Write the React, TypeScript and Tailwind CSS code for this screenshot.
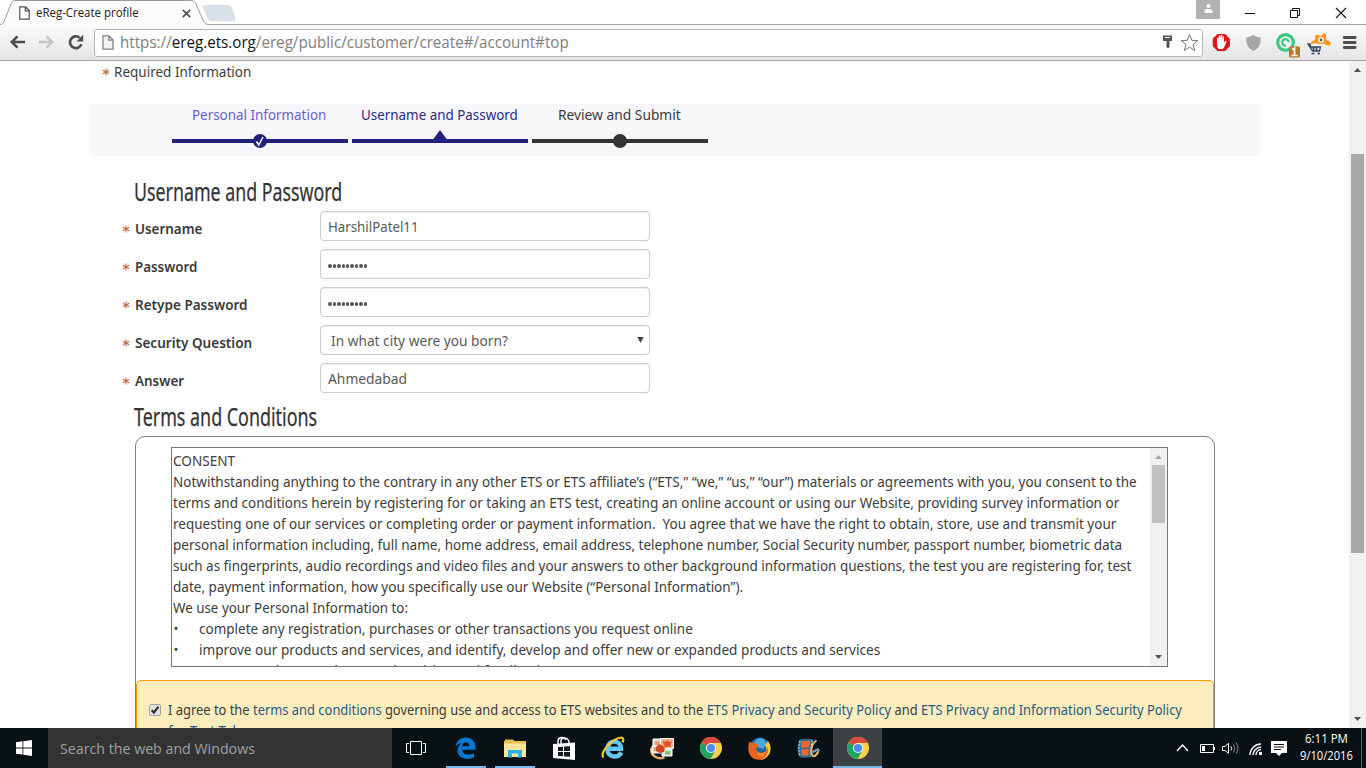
import React, { useLayoutEffect, useRef } from "react";

/* Sets one line of text to the width of its box. */
function Fit({ className, children }: { className: string; children: React.ReactNode }) {
  const box = useRef<HTMLSpanElement>(null);
  const text = useRef<HTMLSpanElement>(null);
  useLayoutEffect(() => {
    if (!box.current || !text.current) return;
    const ratio = box.current.clientWidth / text.current.offsetWidth;
    text.current.style.transform = `scaleX(${ratio})`;
  }, []);
  return (
    <span ref={box} className={`block shrink-0 whitespace-pre ${className}`}>
      <span ref={text} className="inline-block origin-left">
        {children}
      </span>
    </span>
  );
}

function PageIcon({ className, stroke, fill = "#fff" }: { className: string; stroke: string; fill?: string }) {
  return (
    <svg className={className} viewBox="0 0 11 14" fill={fill} stroke={stroke} strokeWidth="1.2">
      <path d="M.8.8h5.7l3.7 3.8v8.6H.8zM6.3.8v4h3.9" />
    </svg>
  );
}

function TabStrip() {
  return (
    <div className="relative flex h-[25px] bg-white">
      <svg className="absolute left-0 top-0 h-[26px] w-[1366px]" viewBox="0 0 1366 26" fill="none">
        <path d="M205 24.5H1366" stroke="#a3a3a3" />
        <path d="M0 24.5C3 24.5 4 22 5 19L11 4C12 1.5 13 .5 15 .5H190C194 .5 195 2 196 4L203 20C204 23 206 24.5 209 24.5V26H0z" fill="#fbfbfb" />
        <path d="M0 24.5C3 24.5 4 22 5 19L11 4C12 1.5 13 .5 15 .5H190C194 .5 195 2 196 4L203 20C204 23 206 24.5 209 24.5" stroke="#9a9a9a" />
        <path d="M206 5.5h22c2 0 3 .8 3.500 2l3.500 11c.5 1.500 0 2.300-1.500 2.300H212c-2 0-3-.5-3.700-2L203.500 8c-.6-1.500.5-2.500 2.500-2.500z" fill="#dae0e9" stroke="#d0d5dd" strokeWidth=".7" />
      </svg>
      <div className="relative flex w-full items-center">
        <PageIcon className="ml-[19px] mt-[1px] h-[14px] w-[11px]" stroke="#505050" />
        <Fit className="ml-[6px] mt-[1px] w-[103px] text-[12px] leading-[16px] text-[#222]">eReg-Create profile</Fit>
        <svg className="ml-[43px] mt-[1px] h-[9px] w-[9px]" viewBox="0 0 9 9" stroke="#555" strokeWidth="1.8">
          <path d="M.8.8l7.400 7.400M8.200.8L.8 8.200" />
        </svg>
        <div className="ml-[1005px] flex h-[19px] w-[24px] shrink-0 items-center justify-center self-start bg-[#b2b2b2]">
          <svg className="mb-[3px] h-[9px] w-[9px]" viewBox="0 0 9 9" fill="#fff">
            <circle cx="4.5" cy="2" r="2" />
            <path d="M.5 9V7.500C.5 5.500 2 5 4.500 5s4 .5 4 2.500V9z" />
          </svg>
        </div>
        <svg className="ml-[25px] h-[12px] w-[102px] shrink-0" viewBox="0 0 102 12" fill="none" stroke="#111">
          <path d="M0 6.500h10M45.500 3.500h7v7h-7zM47.500 3.500v-2h7v7h-2" />
          <path d="M91 1l10 10M101 1L91 11" strokeWidth="1.1" />
        </svg>
      </div>
    </div>
  );
}

function Toolbar() {
  return (
    <div className="flex h-[36px] items-center border-b border-[#a5a5a5] bg-gradient-to-b from-[#fbfbfb] to-[#e5e5e5] pb-[1px]">
      <svg className="ml-[9px] h-[16px] w-[75px] shrink-0" viewBox="0 0 75 16" fill="none" strokeWidth="2.6">
        <path d="M16 8H3M8.500 2.300L2.800 8l5.700 5.700" stroke="#4c4c4c" />
        <path d="M30 8h13M37.500 2.300L43.200 8l-5.700 5.700" stroke="#c5c5c5" />
        <path d="M72.400 10.300A5.900 5.900 0 1 1 70.700 3.700" stroke="#4c4c4c" />
        <path d="M74.200 .8v6.700h-6.700z" fill="#4c4c4c" />
      </svg>
      <div className="mt-[1px] ml-[10px] flex h-[28px] w-[1109px] shrink-0 items-center rounded-[3px] border border-[#b5b5b5] bg-white pb-[1px]">
        <PageIcon className="ml-[7px] h-[15px] w-[12px]" stroke="#808080" fill="#f2f2f2" />
        <Fit className="ml-[6px] w-[449px] text-[15.5px] leading-[22px] text-[#808080]">
          https://<span className="text-[#111]">ereg.ets.org</span>/ereg/public/customer/create#/account#top
        </Fit>
        <svg className="ml-[593px] h-[19px] w-[36px] shrink-0" viewBox="0 0 36 19" fill="none">
          <path d="M1 2.500h9v5.500H7.500v6L6 15.500 4.500 14V8H1z" fill="#555" />
          <path d="M3 4.500h5" stroke="#fff" />
          <path d="M27.500 1.500l2.300 5.800 6 .3-4.700 3.900 1.600 6-5.200-3.400-5.200 3.400 1.600-6-4.700-3.900 6-.3z" stroke="#777" />
        </svg>
      </div>
      <svg className="mt-[1px] ml-[8px] h-[30px] w-[146px] shrink-0" viewBox="0 0 146 30">
        <path d="M6.500 6h7.600l4.800 4.800v7.400l-4.800 4.800H6.500l-4.800-4.800V10.800z" fill="#e01318" />
        <path d="M5.900 14.500v-4c0-1 1.500-1 1.500 0V13l.3-4.500c0-1.200 1.600-1.200 1.600 0V13l.3-5.500c0-1 1.600-1 1.600 0V13l.4-4.300c0-1 1.400-1 1.400 0v5.800l1-1.300c.7-.9 1.900-.2 1.400.7l-2.200 5.300c-1 2.800-6.300 2.600-6.800-.3z" fill="#fff" />
        <path d="M42.500 7c2.300 1.800 4.800 2.200 7.300 2.500 0 6-1.300 10.500-7.300 13.500-6-3-7.300-7.500-7.300-13.500 2.500-.3 5-.7 7.300-2.500z" fill="#a5a5a5" />
        <circle cx="74.500" cy="14.500" r="7.800" fill="none" stroke="#39ca80" strokeWidth="3.200" />
        <path d="M77.800 14.300a3.300 3.300 0 1 0-3 3.400" fill="none" stroke="#39ca80" strokeWidth="2.200" />
        <rect x="78" y="18.500" width="11" height="11" rx="1.500" fill="#b8772b" />
        <path d="M81 21.500l2.500-1.300V27M80.500 27.500h6" fill="none" stroke="#fff" strokeWidth="1.7" />
        <path d="M105 7c2-1 3 1 5 1 2-1 2-4 5-2 1 1-.5 3 0 5 2 2 5 2 5 5-2 3-5 1-7-.5-3 1-6 1-8-.5l-5 1c-1-2 2-3 4-4 1-2-1-3 1-5z" fill="#f7981d" />
        <circle cx="110" cy="12" r="2.800" fill="#fff" />
        <circle cx="110" cy="12" r="1.400" fill="#555" />
        <path d="M97 16h2l1 3h9.500l-1 4h-7z" fill="#dfe4e9" stroke="#34495e" strokeWidth="1.3" />
        <path d="M102.500 19v4M105.500 19v4M100.500 25.500h3M106.500 25.500h2.500" fill="none" stroke="#34495e" strokeWidth="1.7" />
        <path d="M133.200 9.500h11M133.200 14.500h11M133.200 19.500h11" stroke="#4f4f4f" strokeWidth="2.8" strokeLinecap="round" />
      </svg>
    </div>
  );
}

function Star({ className }: { className: string }) {
  return (
    <svg className={`h-[8px] w-[8px] shrink-0 ${className}`} viewBox="0 0 8 8" stroke="#c2623f" strokeWidth="1.1">
      <path d="M4 .5v7M.8 2.300l6.400 3.400M7.200 2.300L.8 5.700" />
    </svg>
  );
}

function Field({ label, width, children, extra }: { label: string; width: string; children: React.ReactNode; extra?: React.ReactNode }) {
  return (
    <div className="flex h-[30px] items-center">
      <Star className="ml-[122px] mt-[6px]" />
      <div className="ml-[4.5px] mt-[5px] w-[185.5px]">
        <Fit className={`${width} text-[14px] font-semibold leading-[20px] text-[#3a3a3a]`}>{label}</Fit>
      </div>
      <div className="flex h-[30px] w-[330px] items-center rounded-[4px] border border-[#ccc] bg-white pl-[7.4px] text-[14px] leading-[20px] text-[#5a5a5a] shadow-[inset_0_1px_1px_rgba(0,0,0,0.075)]">
        {children}
        {extra}
      </div>
    </div>
  );
}

function Dots() {
  return (
    <div className="mt-[4px] flex gap-[1px]">
      {Array.from({ length: 9 }, (_, i) => (
        <span key={i} className="h-[3.4px] w-[3.4px] rounded-full bg-[#555]" />
      ))}
    </div>
  );
}

function Steps() {
  return (
    <div className="ml-[90px] mt-[21px] flex h-[52px] w-[1170px] gap-[4px] bg-[#f7f7f9] pl-[82px]">
      <div className="flex w-[176px] flex-col items-center">
        <Fit className="mr-[2px] h-[22px] w-[134px] text-[14px] leading-[21px] text-[#6a5fd0]">Personal Information</Fit>
        <svg className="h-[17px] w-[176px]" viewBox="0 0 176 17">
          <path d="M0 13h176v4H0z" fill="#232180" />
        </svg>
        <svg className="relative -mt-[9px] h-[14px] w-[14px]" viewBox="0 0 14 14">
          <circle cx="7" cy="7" r="7" fill="#232180" />
          <path d="M3.500 7.500l2.200 3.500 4.300-8" fill="none" stroke="#fff" strokeWidth="1.5" />
        </svg>
      </div>
      <div className="flex w-[176px] flex-col items-center">
        <Fit className="mr-[1px] h-[22px] w-[157px] text-[14px] leading-[21px] text-[#2c2a86]">Username and Password</Fit>
        <svg className="h-[17px] w-[176px]" viewBox="0 0 176 17" fill="#232180">
          <path d="M0 13h176v4H0zM88 4l7 9.500H81z" />
        </svg>
      </div>
      <div className="flex w-[176px] flex-col items-center">
        <Fit className="mr-[2px] h-[22px] w-[123px] text-[14px] leading-[21px] text-[#3d3d3d]">Review and Submit</Fit>
        <svg className="h-[17px] w-[176px]" viewBox="0 0 176 17">
          <path d="M0 13h176v4H0z" fill="#333" />
        </svg>
        <span className="relative -mt-[9px] h-[14px] w-[14px] rounded-full bg-[#333]" />
      </div>
    </div>
  );
}

function Consent() {
  return (
    <div className="ml-[35px] flex h-[220px] w-[997px] border border-[#777] bg-white">
      <div className="flex-1 overflow-hidden pl-[1.4px] pt-[2px] text-[14px] leading-[21px] text-[#3d3d3d]">
        <Fit className="h-[21px] w-[62px]">CONSENT</Fit>
        <Fit className="h-[21px] w-[964px]">Notwithstanding anything to the contrary in any other ETS or ETS affiliate’s (“ETS,” “we,” “us,” “our”) materials or agreements with you, you consent to the</Fit>
        <Fit className="h-[21px] w-[946px]">terms and conditions herein by registering for or taking an ETS test, creating an online account or using our Website, providing survey information or</Fit>
        <Fit className="h-[21px] w-[943px]">requesting one of our services or completing order or payment information.  You agree that we have the right to obtain, store, use and transmit your</Fit>
        <Fit className="h-[21px] w-[949px]">personal information including, full name, home address, email address, telephone number, Social Security number, passport number, biometric data</Fit>
        <Fit className="h-[21px] w-[958px]">such as fingerprints, audio recordings and video files and your answers to other background information questions, the test you are registering for, test</Fit>
        <Fit className="h-[21px] w-[570px]">date, payment information, how you specifically use our Website (“Personal Information”).</Fit>
        <Fit className="h-[21px] w-[235px]">We use your Personal Information to:</Fit>
        <div className="flex"><span className="w-[25.5px] text-[13px]">•</span><Fit className="h-[21px] w-[494px]">complete any registration, purchases or other transactions you request online</Fit></div>
        <div className="flex"><span className="w-[25.5px] text-[13px]">•</span><Fit className="h-[21px] w-[681px]">improve our products and services, and identify, develop and offer new or expanded products and services</Fit></div>
        <div className="flex"><span className="w-[25.5px] text-[13px]">•</span><Fit className="h-[21px] w-[345px]">process and respond to your inquiries and feedback</Fit></div>
      </div>
      <div className="flex w-[17px] flex-col items-center bg-[#f1f1f1]">
        <svg className="mt-[7px] h-[4px] w-[7px]" viewBox="0 0 7 4" fill="#a3a3a3"><path d="M3.500 0L7 4H0z" /></svg>
        <div className="mt-[6px] h-[58px] w-[13px] bg-[#c1c1c1]" />
        <svg className="mb-[7px] mt-auto h-[4px] w-[7px]" viewBox="0 0 7 4" fill="#505050"><path d="M0 0h7L3.500 4z" /></svg>
      </div>
    </div>
  );
}

function Agreement() {
  return (
    <div className="mt-[13px] flex h-[80px] rounded-[5px] border border-[#f90] bg-[#fdedbd] pl-[12px] pt-[18px]">
      <svg className="mt-[5px] h-[12px] w-[12px] shrink-0" viewBox="0 0 12 12">
        <rect x=".5" y=".5" width="11" height="11" rx="1.500" fill="#e3e3e3" stroke="#a2a2a2" />
        <path d="M2.700 6.200L4.900 8.500 9.400 2.800" fill="none" stroke="#333" strokeWidth="2.2" />
      </svg>
      <div className="ml-[7px] text-[14px] leading-[21px] text-[#3a3a3a]">
        <Fit className="h-[21px] w-[1014px]">
          I agree to the <span className="text-[#255b84]">terms and conditions</span> governing use and access to ETS websites and to the <span className="text-[#255b84]">ETS Privacy and Security Policy</span> and <span className="text-[#255b84]">ETS Privacy and Information Security Policy</span>
        </Fit>
        <Fit className="h-[21px] w-[91px] text-[#255b84]">for Test Takers</Fit>
      </div>
    </div>
  );
}

function Page() {
  return (
    <div className="flex h-[667px] overflow-hidden bg-white font-['Noto_Sans',sans-serif]">
      <div className="w-[1349px] shrink-0">
        <div className="flex h-[22px] items-center">
          <Star className="ml-[102px]" />
          <Fit className="ml-[4px] w-[137px] text-[14px] leading-[20px] text-[#3d3d3d]">Required Information</Fit>
        </div>
        <Steps />
        <div className="ml-[134.4px] mt-[18px] h-[37px]">
          <Fit className="w-[208px] text-[25.5px] leading-[34px] text-[#333] [-webkit-text-stroke:0.25px_#333]">Username and Password</Fit>
        </div>
        <div className="flex flex-col gap-[8px]">
          <Field label="Username" width="w-[67px]"><Fit className="mt-[2px] w-[91px]">HarshilPatel11</Fit></Field>
          <Field label="Password" width="w-[62px]"><Dots /></Field>
          <Field label="Retype Password" width="w-[113px]"><Dots /></Field>
          <Field
            label="Security Question"
            width="w-[117px]"
            extra={<svg className="ml-auto mr-[5.5px] mt-[-1px] h-[6px] w-[7px]" viewBox="0 0 7 6" fill="#444"><path d="M.3 0h6.400L3.500 6z" /></svg>}
          >
            <Fit className="ml-[3px] mt-[2px] w-[177px]">In what city were you born?</Fit>
          </Field>
          <Field label="Answer" width="w-[49px]"><Fit className="mt-[2px] w-[79px]">Ahmedabad</Fit></Field>
        </div>
        <div className="ml-[134.4px] mt-[6px] h-[37px]">
          <Fit className="w-[183px] text-[25.5px] leading-[34px] text-[#333] [-webkit-text-stroke:0.25px_#333]">Terms and Conditions</Fit>
        </div>
        <div className="ml-[135px] h-[340px] w-[1080px] rounded-t-[10px] border border-[#808080] pt-[10px]">
          <Consent />
          <Agreement />
        </div>
      </div>
      <div className="flex w-[17px] shrink-0 flex-col items-center bg-[#f1f1f1]">
        <svg className="mt-[7px] h-[4px] w-[7px]" viewBox="0 0 7 4" fill="#505050"><path d="M3.500 0L7 4H0z" /></svg>
        <div className="mt-[82px] h-[399px] w-[13px] bg-[#a8a8a8]" />
        <svg className="mb-[7px] mt-auto h-[4px] w-[7px]" viewBox="0 0 7 4" fill="#505050"><path d="M0 0h7L3.500 4z" /></svg>
      </div>
    </div>
  );
}

function ChromeLogo() {
  return (
    <svg className="h-[22px] w-[22px]" viewBox="0 0 22 22">
      <circle cx="11" cy="11" r="11" fill="#fdd04a" />
      <path d="M11 11L1.500 5.500A11 11 0 0 0 10.500 22L15.300 13.500z" fill="#1da362" />
      <path d="M11 11L1.500 5.500A11 11 0 0 1 20.800 6H11z" fill="#dc4a3d" />
      <circle cx="11" cy="11" r="5.1" fill="#f3f3f3" />
      <circle cx="11" cy="11" r="4" fill="#4c8bf5" />
    </svg>
  );
}

function TaskButton({ children, state = "" }: { children: React.ReactNode; state?: string }) {
  return <div className={`flex h-[40px] w-[49px] shrink-0 items-center justify-center ${state}`}>{children}</div>;
}

function Taskbar() {
  return (
    <div className="flex h-[40px] items-center bg-[#0a1114]">
      <div className="flex w-[48px] items-center pl-[16px]">
        <svg className="h-[16px] w-[16px]" viewBox="0 0 16 16" fill="#fff">
          <path d="M0 2.200l6.500-.9v6.200H0zM7.300 1.200L16 0v7.500H7.300zM0 8.400h6.500v6.200L0 13.700zM7.300 8.400H16V16l-8.700-1.200z" />
        </svg>
      </div>
      <div className="flex h-[40px] w-[344px] shrink-0 items-center bg-[#333] pl-[12px]">
        <Fit className="mt-[2px] w-[195px] text-[14.5px] leading-[20px] text-[#a0a0a0]">Search the web and Windows</Fit>
      </div>
      <TaskButton>
        <svg className="mr-[1px] h-[14px] w-[20px]" viewBox="0 0 20 14" fill="none" stroke="#fff"><path d="M4.500.5h11v13h-11zM3 2.500H.5v9H3M17 2.500h2.500v9H17" /></svg>
      </TaskButton>
      <TaskButton state="relative after:absolute after:bottom-0 after:left-[5px] after:h-[2px] after:w-[40px] after:bg-[#76b9ed]">
        <svg className="h-[22px] w-[21px]" viewBox="0 0 21 22" fill="#0078d7">
          <path d="M.5 10C1 4.500 5 .5 11 .5c6 0 9.500 4.500 9.500 9.800v2.500H7.200c.2 5.200 7.300 6.300 11.800 3.300v4.200c-7 3.600-16.500 1-16.500-7 0-3.500 2-5.800 4.700-7.300C3.800 6.300 1.800 8 .5 10zm6.800-.8h7c.2-5.200-6.400-5-7 0z" />
        </svg>
      </TaskButton>
      <TaskButton state="relative after:absolute after:bottom-0 after:left-[5px] after:h-[2px] after:w-[40px] after:bg-[#76b9ed]">
        <svg className="h-[19px] w-[22px]" viewBox="0 0 22 19">
          <path d="M0 2h1V.5h8L10.500 2H22v16H0z" fill="#e9bd58" />
          <path d="M0 4.500h22V18H0z" fill="#fde69b" />
          <path d="M4 11h14v7.500h-4v-4H8v4H4z" fill="#25b5ef" />
        </svg>
      </TaskButton>
      <TaskButton>
        <svg className="h-[24px] w-[22px]" viewBox="0 0 22 24">
          <path d="M5 8V5c0-4 6-5 8-1M8 8V4c1-3 7-3 8 2v2" fill="none" stroke="#fff" strokeWidth="1.4" />
          <path d="M0 8l22-1.500V24L0 22z" fill="#fff" />
          <path d="M5 11l5-.3v4.200H5zM11 10.600l6-.4v4.700h-6zM5 16h5v4.300L5 20zM11 16h6v4.800l-6-.4z" fill="#111a1f" />
        </svg>
      </TaskButton>
      <TaskButton>
        <svg className="h-[24px] w-[24px]" viewBox="0 0 24 24" fill="none">
          <path d="M20.500 16.500c-4 6.500-14 5-14-3.500C6.500 3 20 3.500 20 12.700H8" stroke="#64c6f2" strokeWidth="4.4" />
          <path d="M2.500 21.500C-1.500 17 11 2 20.500 1.500c2.500.3 2 3 1 5" stroke="#f6c532" strokeWidth="2.2" />
        </svg>
      </TaskButton>
      <TaskButton>
        <svg className="h-[23px] w-[24px]" viewBox="0 0 24 23">
          <path d="M1.500 11c-1.500 7 5 12 13 9.500" fill="none" stroke="#dfae66" strokeWidth="2.6" />
          <path d="M3 2h9v8H3zM2 9h9v7H2zM12 11h10v8H12z" fill="#d8e8ea" stroke="#fff" />
          <path d="M3.500 10h6v4h-6zM4.500 4h5v4h-5z" fill="#f0a060" />
          <path d="M15 14h5.500v3.500H15z" fill="#86c263" />
          <path d="M10.500 1.500h13v10h-13z" fill="#f4b08b" stroke="#fff" />
          <path d="M12.500 4l3 1 2-2 1.500 2 3-.5-1.500 3 .5 2.500-3-.5-2 1-2-2z" fill="#e05324" />
          <path d="M6 10l3-3 4 2 2 2-1 4-4 1-4-2z" fill="#d8431f" />
        </svg>
      </TaskButton>
      <TaskButton><ChromeLogo /></TaskButton>
      <TaskButton>
        <svg className="h-[23px] w-[23px]" viewBox="0 0 23 23">
          <circle cx="12" cy="11" r="10.500" fill="#2166a8" />
          <path d="M9 2c5-2 9 1 9 5l-3 5-5-2-4-4z" fill="#49a9d8" />
          <path d="M20 4c5 6 3 18-8 19 6-3 8-10 5-15z" fill="#fbc637" />
          <path d="M1.500 4.500l2.500 1.500c2-.7 4 0 5 1.500l2.500 1-3.500 2.500c-.5 5 5 6.500 9.500 3.500 1-1 2-3 2-5 2 6-2 13-8 13.300C4.500 23 .5 18 .3 12 .2 8.500.8 6 1.500 4.500z" fill="#e8641e" />
          <path d="M8.500 13c1 3 5 4 9 1.500L16 19c-3 2-8 0-7.500-6z" fill="#f08a25" />
        </svg>
      </TaskButton>
      <TaskButton>
        <svg className="h-[21px] w-[24px]" viewBox="0 0 24 21">
          <path d="M2.500 1.500c4-1 10-1 14 0L14 19c-4 1-9 1-11.500 0-2.500-4-2.500-13 0-17.500z" fill="#2f6996" />
          <path d="M4.500 3h9l-1.500 6.500-8 .5zM4 11.500l8-.5-.8 6.500H4.800z" fill="#e9672c" />
          <path d="M3 3c-1.500 5-1.500 10 0 15M15 2.500l-2 16" fill="none" stroke="#b4d3e4" strokeWidth="1.3" strokeDasharray="1.600 1.500" />
          <path d="M19.500 2.500c-5 3-7 12-3.500 15.500 3 1 4-2 5.500-5" fill="none" stroke="#e9bd68" strokeWidth="2" />
          <path d="M15 13l6-3 2.500 3-3-.5-4.500 3z" fill="#74a6c8" />
        </svg>
      </TaskButton>
      <TaskButton state="relative bg-[#3d4143] after:absolute after:bottom-0 after:left-0 after:h-[2px] after:w-[49px] after:bg-[#76b9ed]"><ChromeLogo /></TaskButton>
      <svg className="ml-[294px] h-[20px] w-[112px] shrink-0" viewBox="0 0 112 20" fill="none" stroke="#fff">
        <path d="M1 13l5.500-6L12 13" strokeWidth="1.3" />
        <path d="M24.500 6.500h13v8h-13zM38.500 9v3" />
        <path d="M26 8h3v5h-3z" fill="#fff" stroke="none" />
        <path d="M46.500 8.500H49l3.500-3.200v10L49 12.500h-2.500z" />
        <path d="M55 8.500q1.500 2 0 4" />
        <path d="M57.500 6.500q3 4 0 8M60 4.500q4 6 0 11" stroke="#888" />
        <path d="M74 17C74 11 79 6 85 6M77 17c0-4 4-8 8-8M80 17c0-3 2.500-5.500 5-5.500" strokeWidth="1.3" />
        <path d="M83 14h3v3h-3zM95 3h16v12h-5l-3 3-3-3h-5z" fill="#fff" stroke="none" />
        <path d="M98 6.500h10M98 9h10M98 11.500h7" stroke="#111" />
      </svg>
      <div className="ml-[11px] flex h-[36px] w-[54px] shrink-0 flex-col items-center text-[12px] leading-[17px] text-white">
        <Fit className="w-[43px]">6:11 PM</Fit>
        <Fit className="w-[53px]">9/10/2016</Fit>
      </div>
      <div className="ml-[8px] h-[40px] w-[1px] bg-[#5b6062]" />
    </div>
  );
}

export default function App() {
  return (
    <div className="h-[768px] w-[1366px] overflow-hidden bg-white font-['Open_Sans','Noto_Sans',sans-serif]">
      <TabStrip />
      <Toolbar />
      <Page />
      <Taskbar />
    </div>
  );
}
